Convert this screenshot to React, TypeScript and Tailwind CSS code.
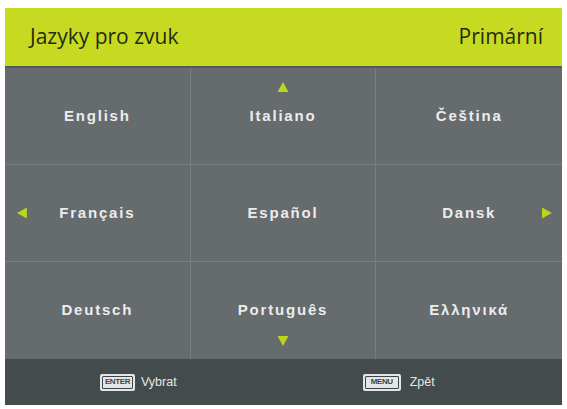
import React from "react"

const cells = [
  "English",
  "Italiano",
  "Čeština",
  "Français",
  "Español",
  "Dansk",
  "Deutsch",
  "Português",
  "Ελληνικά",
]

function Tri({ dir, className }: { dir: "up" | "down" | "left" | "right"; className: string }) {
  const pts = {
    up: "5,0 10,9 0,9",
    down: "0,0 10,0 5,9",
    left: "0,5 9,0 9,10",
    right: "0,0 9,5 0,10",
  }[dir]
  return (
    <svg viewBox="0 0 10 10" className={className}>
      <polygon points={pts} fill="#bcd41f" />
    </svg>
  )
}

function Badge({ label, w }: { label: string; w: string }) {
  return (
    <span className={`flex h-[17px] ${w} items-center justify-center rounded-[2px] bg-[#e4e6e5] p-[2px]`}>
      <span className="flex h-full w-full items-center justify-center rounded-[1px] border border-[#3c4446] text-[8px] font-bold leading-none tracking-[-0.4px] text-[#3c4446]">
        {label}
      </span>
    </span>
  )
}

export default function App() {
  return (
    <div
      className="h-[409px] w-[567px] bg-white pl-[5px] pr-[5px] pt-[8px]"
      style={{ fontFamily: "'Liberation Sans', Arial, sans-serif" }}
    >
      <div className="flex h-[397px] w-[557px] flex-col">
        {/* Header */}
        <div className="flex h-[58px] items-center justify-between bg-[#c7da22] pl-[25px] pr-[19px]">
          <span
            className="text-[21px] text-[#262b10]"
            style={{ fontFamily: "'Open Sans', 'Noto Sans', sans-serif" }}
          >
            Jazyky pro zvuk
          </span>
          <span
            className="text-[21px] text-[#262b10]"
            style={{ fontFamily: "'Open Sans', 'Noto Sans', sans-serif" }}
          >
            Primární
          </span>
        </div>

        {/* Grid */}
        <div className="grid h-[293px] grid-cols-3 grid-rows-3 border-t-2 border-[#525a5c] bg-[#666b6e]">
          {cells.map((c, i) => {
            const col = i % 3
            const row = Math.floor(i / 3)
            return (
              <div
                key={c}
                className={`relative flex items-center justify-center border-[#797e81] ${
                  col < 2 ? "border-r" : ""
                } ${row < 2 ? "border-b" : ""}`}
              >
                <span className="text-[15px] font-bold tracking-[1.8px] text-[#ececec]">{c}</span>
                {i === 1 && <Tri dir="up" className="absolute left-1/2 top-[14px] h-[11px] w-[11px] -translate-x-1/2" />}
                {i === 7 && <Tri dir="down" className="absolute bottom-[12px] left-1/2 h-[11px] w-[11px] -translate-x-1/2" />}
                {i === 3 && <Tri dir="left" className="absolute left-[12px] top-1/2 h-[11px] w-[11px] -translate-y-1/2" />}
                {i === 5 && <Tri dir="right" className="absolute right-[9px] top-1/2 h-[11px] w-[11px] -translate-y-1/2" />}
              </div>
            )
          })}
        </div>

        {/* Footer */}
        <div className="flex h-[46px] items-center bg-[#434b4d] text-[12.5px] text-[#e6e8e8]">
          <div className="flex items-center gap-[6px] pl-[95px]">
            <Badge label="ENTER" w="w-[35px]" />
            <span>Vybrat</span>
          </div>
          <div className="flex items-center gap-[9px] pl-[186px]">
            <Badge label="MENU" w="w-[38px]" />
            <span>Zpět</span>
          </div>
        </div>
      </div>
    </div>
  )
}
